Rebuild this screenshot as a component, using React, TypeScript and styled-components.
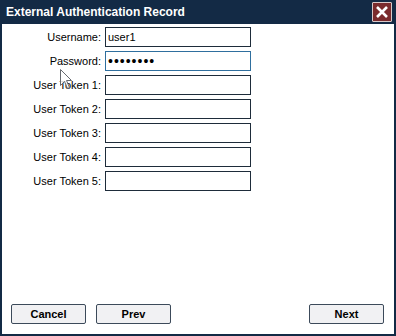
import { Fragment } from "react";
import styled, { createGlobalStyle } from "styled-components";

const GlobalStyle = createGlobalStyle`
    html, body {
        margin: 0;
        padding: 0;
        background: #ffffff;
    }
    body {
        font-family: "Liberation Sans", Arial, sans-serif;
    }
`;

const Window = styled.div`
    position: relative;
    width: 396px;
    height: 336px;
    box-sizing: border-box;
    display: flex;
    flex-direction: column;
    background: #ffffff;
    border: 2px solid #132a45;
    border-top: none;
    overflow: hidden;
`;

const TitleBar = styled.div`
    height: 24px;
    margin: 0 -2px;
    padding: 0 4px 0 6px;
    display: flex;
    align-items: center;
    justify-content: space-between;
    background: #132a45;
`;

const Title = styled.h1`
    margin: 0;
    color: #ffffff;
    font-size: 12px;
    font-weight: bold;
`;

const CloseButton = styled.button`
    width: 20px;
    height: 20px;
    padding: 0;
    display: flex;
    align-items: center;
    justify-content: center;
    background: #7a2a2c;
    border: 1px solid #d8c8c8;
    border-radius: 1px;
`;

const Body = styled.div`
    flex: 1;
    display: flex;
    flex-direction: column;
    justify-content: space-between;
    padding: 3px 10px 10px 9px;
`;

const Form = styled.div`
    display: grid;
    grid-template-columns: 90px 146px;
    column-gap: 4px;
    row-gap: 4px;
    align-items: center;
`;

const Label = styled.label`
    text-align: right;
    font-size: 11px;
    color: #000000;
`;

const Field = styled.input<{ $focused?: boolean; $secret?: boolean }>`
    box-sizing: border-box;
    width: 146px;
    height: 20px;
    padding: 0 2px;
    font-family: "Liberation Sans", Arial, sans-serif;
    font-size: ${props => props.$secret ? "14px" : "11px"};
    letter-spacing: ${props => props.$secret ? "1px" : "0"};
    color: #000000;
    background: #ffffff;
    border: 1px solid ${props => props.$focused ? "#2f6f9e" : "#1e2c3a"};
    border-radius: 0;
    outline: none;
`;

const Buttons = styled.div`
    display: flex;
    gap: 10px;
`;

const Button = styled.button<{ $right?: boolean }>`
    width: 75px;
    height: 20px;
    padding: 0;
    margin-left: ${props => props.$right ? "auto" : "0"};
    font-family: "Liberation Sans", Arial, sans-serif;
    font-size: 11px;
    font-weight: bold;
    color: #000000;
    background: #f1f1f3;
    border: 1px solid #3c4a5a;
    border-radius: 2px;
`;

const Cursor = styled.svg`
    position: absolute;
    left: 58px;
    top: 69px;
`;

const fields = [
    { label: "Username:", value: "user1" },
    { label: "Password:", value: "password", secret: true },
    { label: "User Token 1:", value: "" },
    { label: "User Token 2:", value: "" },
    { label: "User Token 3:", value: "" },
    { label: "User Token 4:", value: "" },
    { label: "User Token 5:", value: "" },
];

function App() {
    return (
        <>
            <GlobalStyle />
            <Window>
                <TitleBar>
                    <Title>External Authentication Record</Title>
                    <CloseButton>
                        <svg width="14" height="14" viewBox="0 0 14 14">
                            <path d="M2 2 L12 12 M12 2 L2 12" stroke="#ffffff" strokeWidth="2.6" />
                        </svg>
                    </CloseButton>
                </TitleBar>
                <Body>
                    <Form>
                        {fields.map((f) => (
                            <Fragment key={f.label}>
                                <Label>{f.label}</Label>
                                <Field
                                    type={f.secret ? "password" : "text"}
                                    defaultValue={f.value}
                                    $focused={f.secret}
                                    $secret={f.secret}
                                />
                            </Fragment>
                        ))}
                    </Form>
                    <Buttons>
                        <Button>Cancel</Button>
                        <Button>Prev</Button>
                        <Button $right>Next</Button>
                    </Buttons>
                </Body>
                <Cursor width="13" height="21" viewBox="0 0 13 21">
                    <path
                        d="M0.5 0.5 L0.5 16.5 L4.5 12.5 L7.5 19.5 L9.5 18.5 L6.5 11.5 L11.5 11.5 Z"
                        fill="#ffffff"
                        fillOpacity="0.85"
                        stroke="#666a70"
                        strokeWidth="1"
                    />
                </Cursor>
            </Window>
        </>
    );
}

export default App;
